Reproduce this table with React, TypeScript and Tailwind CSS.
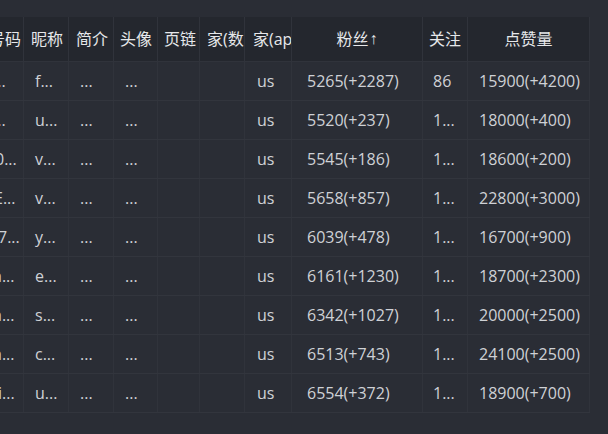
import React from "react";

const W = [
  "w-[24px]",
  "w-[45px]",
  "w-[45px]",
  "w-[44px]",
  "w-[42px]",
  "w-[45px]",
  "w-[47px]",
  "w-[131px]",
  "w-[45px]",
  "w-[122px]",
];

type Row = {
  c0: string;
  c0ml: string;
  nick: string;
  fans: string;
  follow: string;
  likes: string;
};

const rows: Row[] = [
  { c0: "...", c0ml: "ml-[-7px]", nick: "f...", fans: "5265(+2287)", follow: "86", likes: "15900(+4200)" },
  { c0: "...", c0ml: "ml-[-7px]", nick: "u...", fans: "5520(+237)", follow: "1...", likes: "18000(+400)" },
  { c0: "0...", c0ml: "ml-[-5px]", nick: "v...", fans: "5545(+186)", follow: "1...", likes: "18600(+200)" },
  { c0: "E...", c0ml: "ml-[-6px]", nick: "v...", fans: "5658(+857)", follow: "1...", likes: "22800(+3000)" },
  { c0: "7...", c0ml: "ml-[-2px]", nick: "y...", fans: "6039(+478)", follow: "1...", likes: "16700(+900)" },
  { c0: "a...", c0ml: "ml-[-7px]", nick: "e...", fans: "6161(+1230)", follow: "1...", likes: "18700(+2300)" },
  { c0: "a...", c0ml: "ml-[-7px]", nick: "s...", fans: "6342(+1027)", follow: "1...", likes: "20000(+2500)" },
  { c0: "a...", c0ml: "ml-[-7px]", nick: "c...", fans: "6513(+743)", follow: "1...", likes: "24100(+2500)" },
  { c0: "i...", c0ml: "ml-[-2px]", nick: "u...", fans: "6554(+372)", follow: "1...", likes: "18900(+700)" },
];

const cellBase =
  "shrink-0 h-full flex items-center overflow-hidden whitespace-nowrap border-r border-[#30333b]";

function LeftHead({ w, text, pl }: { w: string; text: string; pl: string }) {
  return (
    <div className={`${cellBase} ${w} ${pl}`}>
      <span>{text}</span>
    </div>
  );
}

export default function App() {
  return (
    <div className="w-[608px] h-[434px] overflow-hidden bg-[#2a2d35] pt-[17px] font-['Open_Sans','Noto_Sans_CJK_SC',sans-serif] text-[16px]">
      <div className="w-[590px]">
        {/* header */}
        <div className="flex h-[45px] items-center bg-[#24272e] text-[#e6e7ea] border-b border-[#30333b]">
          <div className={`${cellBase} ${W[0]} justify-end pr-[2px]`}>号码</div>
          <LeftHead w={W[1]} pl="pl-[7px]" text="昵称" />
          <LeftHead w={W[2]} pl="pl-[7px]" text="简介" />
          <LeftHead w={W[3]} pl="pl-[6px]" text="头像" />
          <LeftHead w={W[4]} pl="pl-[6px]" text="页链" />
          <LeftHead w={W[5]} pl="pl-[7px]" text="家(数" />
          <LeftHead w={W[6]} pl="pl-[8px]" text="家(ap" />
          <div className={`${cellBase} ${W[7]} justify-center`}>
            粉丝<span className="font-['Liberation_Sans',sans-serif] ml-[1px]">↑</span>
          </div>
          <div className={`${cellBase} ${W[8]} justify-center`}>关注</div>
          <div className={`${cellBase} ${W[9]} justify-center`}>点赞量</div>
        </div>
        {/* rows */}
        {rows.map((r, i) => (
          <div
            key={i}
            className="flex h-[39px] items-center bg-[#2a2d35] text-[#cfd1d5] border-b border-[#32353d]"
          >
            <div className={`${cellBase} ${W[0]}`}>
              <span className={r.c0ml}>{r.c0}</span>
            </div>
            <div className={`${cellBase} ${W[1]} pl-[11px]`}>{r.nick}</div>
            <div className={`${cellBase} ${W[2]} pl-[11px]`}>...</div>
            <div className={`${cellBase} ${W[3]} pl-[11px]`}>...</div>
            <div className={`${cellBase} ${W[4]}`}></div>
            <div className={`${cellBase} ${W[5]}`}></div>
            <div className={`${cellBase} ${W[6]} pl-[12px]`}>us</div>
            <div className={`${cellBase} ${W[7]} pl-[15px]`}>{r.fans}</div>
            <div className={`${cellBase} ${W[8]} pl-[10px]`}>{r.follow}</div>
            <div className={`${cellBase} ${W[9]} pl-[11px]`}>{r.likes}</div>
          </div>
        ))}
      </div>
    </div>
  );
}
